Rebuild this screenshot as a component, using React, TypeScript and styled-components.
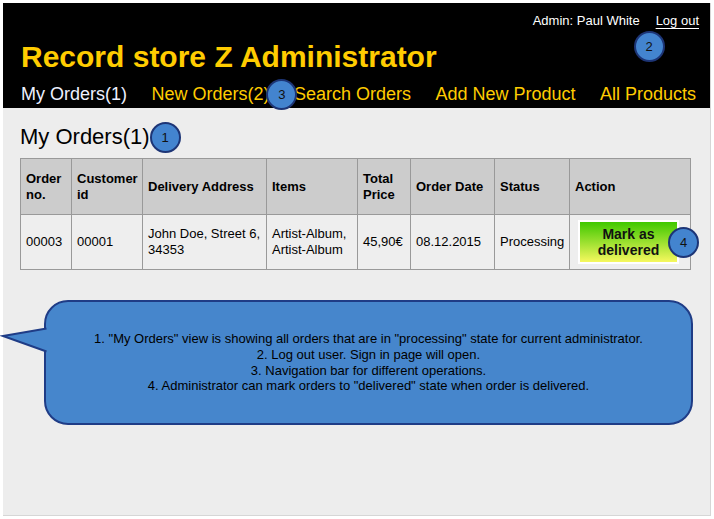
import React from "react";
import styled, { createGlobalStyle, css } from "styled-components";

const Global = createGlobalStyle`
  html, body { margin: 0; padding: 0; background: #ffffff; }
  body { font-family: "Liberation Sans", Arial, sans-serif; }
  * { box-sizing: border-box; }
`;

const Frame = styled.div`
  margin: 3px 0 0 3px;
  width: 708px;
  height: 513px;
  background: #ededed;
  border-right: 1px solid #d6d6d6;
  border-bottom: 1px solid #d6d6d6;
  display: flex;
  flex-direction: column;
`;

const Header = styled.header`
  background: #000;
  padding: 10px 14px 3px 18px;
  display: flex;
  flex-direction: column;
`;

const TopBar = styled.div`
  display: flex;
  justify-content: flex-end;
  gap: 16px;
  font-size: 13px;
  line-height: 16px;
  color: #fff;
  margin-right: -3px;
`;

const LogoutWrap = styled.span`
  position: relative;
`;

const Logout = styled.a`
  color: #fff;
  text-decoration: underline;
  text-underline-offset: 3px;
  cursor: pointer;
`;

const Title = styled.h1`
  margin: 11px 0 0 0;
  font-size: 30px;
  line-height: 34px;
  font-weight: bold;
  color: #ffcc00;
`;

const Nav = styled.nav`
  margin-top: 9px;
  display: flex;
  justify-content: space-between;
  font-size: 18px;
  line-height: 22px;
`;

const NavItem = styled.a<{ $active?: boolean }>`
  position: relative;
  color: ${(p) => (p.$active ? "#eef0ff" : "#ffcc00")};
  cursor: pointer;
  white-space: nowrap;
`;

const Badge = styled.span<{ $x?: number; $y?: number }>`
  width: 31px;
  height: 31px;
  border-radius: 50%;
  background: #4384cf;
  border: 2px solid #1d3576;
  color: #111;
  font-size: 13px;
  line-height: 1;
  display: inline-flex;
  align-items: center;
  justify-content: center;
  font-weight: normal;
  flex: none;
  ${(p) =>
    p.$x !== undefined &&
    css`
      position: absolute;
      left: ${p.$x}px;
      top: ${p.$y}px;
      z-index: 2;
    `}
`;

const Content = styled.main`
  padding: 16px 17px 0 17px;
  display: flex;
  flex-direction: column;
`;

const Heading = styled.h2`
  margin: 0;
  height: 26px;
  display: flex;
  align-items: center;
  font-size: 22px;
  line-height: 26px;
  font-weight: normal;
  color: #000;
`;

const Table = styled.table`
  margin-top: 8px;
  width: 670px;
  table-layout: fixed;
  border-collapse: collapse;
  font-size: 13px;
  line-height: 16px;
  color: #000;
`;

const Th = styled.th<{ $w: number }>`
  width: ${(p) => p.$w}px;
  height: 56px;
  background: #cccccc;
  border: 1px solid #999;
  padding: 4px 4px 4px 5px;
  text-align: left;
  font-weight: bold;
  vertical-align: middle;
`;

const Td = styled.td`
  height: 55px;
  background: #eeeeee;
  border: 1px solid #999;
  padding: 4px 3px 4px 5px;
  vertical-align: middle;
`;

const ActionTd = styled(Td)`
  padding: 4px 8px;
`;

const ButtonWrap = styled.div`
  position: relative;
  width: 101px;
`;

const MarkButton = styled.button`
  width: 101px;
  height: 44px;
  border: 2px solid #fff;
  background: linear-gradient(#3fc800, #f6f85e);
  font-family: "Liberation Sans", Arial, sans-serif;
  font-size: 14px;
  line-height: 16px;
  font-weight: bold;
  color: #111;
  padding: 0;
  cursor: pointer;
`;

const Callout = styled.div`
  position: relative;
  margin: 30px 0 0 24px;
  width: 649px;
  height: 125px;
  background: #4686cc;
  border: 2px solid #1f3c86;
  border-radius: 24px;
  display: flex;
  flex-direction: column;
  align-items: center;
  justify-content: center;
  font-size: 13px;
  line-height: 15.6px;
  color: #000;
  text-align: center;
`;

const Tail = styled.svg`
  position: absolute;
  left: -44px;
  top: 24px;
  overflow: visible;
`;

export default function App() {
  return (
    <>
      <Global />
      <Frame>
        <Header>
          <TopBar>
            <span>Admin: Paul White</span>
            <LogoutWrap>
              <Logout>Log out</Logout>
              <Badge $x={-22} $y={18}>2</Badge>
            </LogoutWrap>
          </TopBar>
          <Title>Record store Z Administrator</Title>
          <Nav>
            <NavItem $active>My Orders(1)</NavItem>
            <NavItem>
              New Orders(2)
              <Badge $x={115} $y={-4}>3</Badge>
            </NavItem>
            <NavItem>Search Orders</NavItem>
            <NavItem>Add New Product</NavItem>
            <NavItem>All Products</NavItem>
          </Nav>
        </Header>
        <Content>
          <Heading>
            My Orders(1)
            <Badge>1</Badge>
          </Heading>
          <Table>
            <thead>
              <tr>
                <Th $w={51}>Order no.</Th>
                <Th $w={71}>Customer id</Th>
                <Th $w={124}>Delivery Address</Th>
                <Th $w={91}>Items</Th>
                <Th $w={53}>Total Price</Th>
                <Th $w={84}>Order Date</Th>
                <Th $w={75}>Status</Th>
                <Th $w={121}>Action</Th>
              </tr>
            </thead>
            <tbody>
              <tr>
                <Td>00003</Td>
                <Td>00001</Td>
                <Td>John Doe, Street 6, 34353</Td>
                <Td>Artist-Album, Artist-Album</Td>
                <Td>45,90€</Td>
                <Td>08.12.2015</Td>
                <Td>Processing</Td>
                <ActionTd>
                  <ButtonWrap>
                    <MarkButton>
                      Mark as
                      <br />
                      delivered
                    </MarkButton>
                    <Badge $x={90} $y={7}>4</Badge>
                  </ButtonWrap>
                </ActionTd>
              </tr>
            </tbody>
          </Table>
          <Callout>
            <Tail width="46" height="30" viewBox="0 0 46 30">
              <polygon points="1,10 46,2 46,26" fill="#4686cc" />
              <polyline
                points="44.5,2.5 1,10 44.5,25.5"
                fill="none"
                stroke="#1f3c86"
                strokeWidth="2"
                strokeLinejoin="miter"
              />
            </Tail>
            <div>1. "My Orders" view is showing all orders that are in "processing" state for current administrator.</div>
            <div>2. Log out user. Sign in page will open.</div>
            <div>3. Navigation bar for different operations.</div>
            <div>4. Administrator can mark orders to "delivered" state when order is delivered.</div>
          </Callout>
        </Content>
      </Frame>
    </>
  );
}
